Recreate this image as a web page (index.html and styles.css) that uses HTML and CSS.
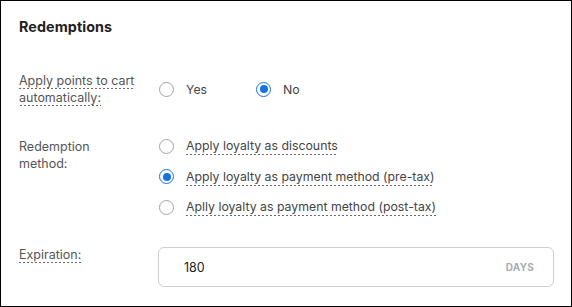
FILE: index.html
```html
<!DOCTYPE html>
<html>
<head>
<meta charset="utf-8">
<link rel="stylesheet" href="styles.css">
</head>
<body>
<div class="panel">
  <h2 class="title">Redemptions</h2>

  <div class="row row-center">
    <div class="label"><span class="tip">Apply points to cart automatically:</span></div>
    <div class="inline-options">
      <label class="option"><span class="radio"></span><span class="opt-text">Yes</span></label>
      <label class="option"><span class="radio checked"></span><span class="opt-text">No</span></label>
    </div>
  </div>

  <div class="row row-method">
    <div class="label label-plain">Redemption method:</div>
    <div class="stack-options">
      <label class="option"><span class="radio"></span><span class="opt-text tip">Apply loyalty as discounts</span></label>
      <label class="option"><span class="radio checked"></span><span class="opt-text tip">Apply loyalty as payment method (pre-tax)</span></label>
      <label class="option"><span class="radio"></span><span class="opt-text tip">Aplly loyalty as payment method (post-tax)</span></label>
    </div>
  </div>

  <div class="row row-exp">
    <div class="label label-exp"><span class="tip">Expiration:</span></div>
    <div class="field">
      <span class="field-value">180</span>
      <span class="field-unit">DAYS</span>
    </div>
  </div>
</div>
</body>
</html>
```
FILE: styles.css
```css
* { box-sizing: border-box; }
html, body { margin: 0; padding: 0; }
body {
  width: 572px;
  height: 307px;
  font-family: Inter, "Noto Sans", sans-serif;
  background: #fff;
  color: #222;
}
.panel {
  width: 572px;
  height: 307px;
  border: 1px solid #000;
  padding: 15px 17px 0 18px;
}
.title {
  margin: 0;
  font-size: 14.3px;
  line-height: 22px;
  font-weight: 700;
  color: #1f1f1f;
  letter-spacing: 0.1px;
}
.row {
  display: grid;
  grid-template-columns: 139px 1fr;
}
.row-center {
  align-items: center;
  margin-top: 34px;
}
.row-method {
  align-items: start;
  margin-top: 29px;
}
.row-exp {
  align-items: start;
  margin-top: 30px;
}
.label {
  font-size: 12.5px;
  line-height: 17px;
  color: #555;
  max-width: 116px;
}
.label-plain { margin-top: 3px; }
.label-exp { margin-top: -1px; }
.tip {
  background-image: linear-gradient(to right, #6b6b6b 60%, transparent 60%);
  background-size: 4px 1px;
  background-repeat: repeat-x;
  background-position: 0 100%;
  padding-bottom: 1px;
}
.inline-options {
  display: flex;
  gap: 49px;
  padding-left: 1px;
}
.stack-options {
  display: flex;
  flex-direction: column;
  gap: 10.5px;
  padding-left: 1px;
  padding-top: 1px;
}
.option {
  display: flex;
  align-items: center;
  gap: 12px;
  height: 20px;
  font-size: 12.3px;
  color: #444;
}
.opt-text { line-height: 17px; }
.radio {
  width: 15px;
  height: 15px;
  border-radius: 50%;
  border: 1px solid #a3a3a3;
  background: #fff;
  flex: none;
  display: flex;
  align-items: center;
  justify-content: center;
}
.radio.checked {
  border: 1.5px solid #1672e0;
}
.radio.checked::after {
  content: "";
  width: 8px;
  height: 8px;
  border-radius: 50%;
  background: #1672e0;
}
.field {
  height: 40px;
  border: 1px solid #cfcfcf;
  border-radius: 6px;
  display: flex;
  align-items: center;
  justify-content: space-between;
  padding: 0 19px 0 25px;
  width: 396px;
}
.field-value {
  font-size: 12.5px;
  color: #222;
}
.field-unit {
  font-size: 10px;
  font-weight: 700;
  color: #a9aeb2;
  letter-spacing: 0.2px;
}
```
